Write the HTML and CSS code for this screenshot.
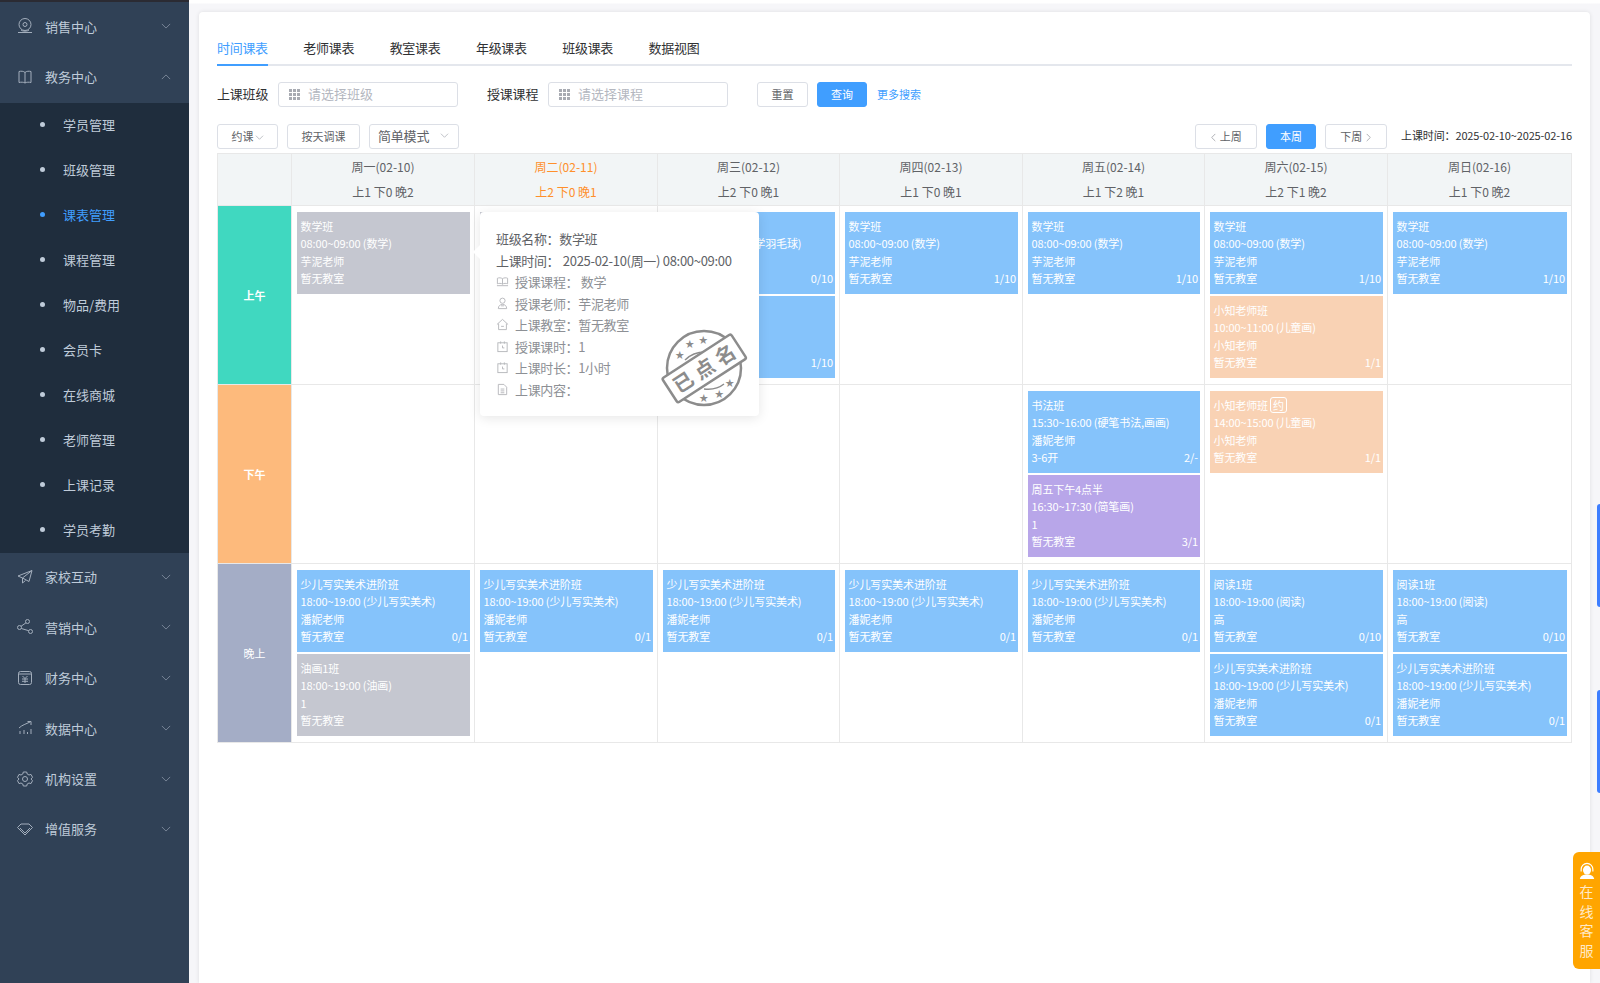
FILE: index.html
```html
<!DOCTYPE html>
<html lang="zh-CN">
<head>
    <meta charset="UTF-8">
    <title>课表管理</title>
    <link rel="stylesheet" href="styles.css">
</head>
<body>
    <aside class="sidebar">
        <div class="menu-title">
            <svg class="menu-icon" viewBox="0 0 18 18"><circle cx="9" cy="7.500" r="6"/><circle cx="9" cy="7.500" r="2"/><path d="M2 15.500h14M5 13c1 1.500 7 1.500 8 0"/></svg>
            <span>销售中心</span>
            <svg class="chevron" viewBox="0 0 12 7"><path d="M1 1l5 5 5-5"/></svg>
        </div>
        <div class="menu-title">
            <svg class="menu-icon" viewBox="0 0 18 18"><path d="M9 4.500C7.500 3 5 3 3 3.500v11c2-.5 4.500-.5 6 .5 1.500-1 4-1 6-.5v-11C13 3 10.500 3 9 4.500zM9 4.500V15"/></svg>
            <span>教务中心</span>
            <svg class="chevron" viewBox="0 0 12 7"><path d="M1 6l5-5 5 5"/></svg>
        </div>
        <ul class="submenu">
            <li>学员管理</li>
            <li>班级管理</li>
            <li class="active">课表管理</li>
            <li>课程管理</li>
            <li>物品/费用</li>
            <li>会员卡</li>
            <li>在线商城</li>
            <li>老师管理</li>
            <li>上课记录</li>
            <li>学员考勤</li>
        </ul>
        <div class="menu-title">
            <svg class="menu-icon" viewBox="0 0 18 18"><path d="M16 2.500L2 8l4.500 2L16 2.500l-3 11-6.500-3.500v5l3-2.500"/></svg>
            <span>家校互动</span>
            <svg class="chevron" viewBox="0 0 12 7"><path d="M1 1l5 5 5-5"/></svg>
        </div>
        <div class="menu-title">
            <svg class="menu-icon" viewBox="0 0 18 18"><circle cx="3.500" cy="9.500" r="2"/><circle cx="11.500" cy="3.500" r="2"/><circle cx="14.500" cy="13.500" r="2"/><path d="M5 8.300l5-3.500M5.300 10.500l7.400 2.200"/></svg>
            <span>营销中心</span>
            <svg class="chevron" viewBox="0 0 12 7"><path d="M1 1l5 5 5-5"/></svg>
        </div>
        <div class="menu-title">
            <svg class="menu-icon" viewBox="0 0 18 18"><rect x="2.500" y="2.500" width="13" height="13" rx="2"/><path d="M2.500 5h13M6.500 7l2.500 2.500L11.500 7M6 10h6M6 12.300h6M9 9.500v4.500"/></svg>
            <span>财务中心</span>
            <svg class="chevron" viewBox="0 0 12 7"><path d="M1 1l5 5 5-5"/></svg>
        </div>
        <div class="menu-title">
            <svg class="menu-icon" viewBox="0 0 18 18"><path d="M3 9c3-3 7-4 11-6M11.500 2.500H15V6M4 15v-3M8 15v-4M11.500 15v-2M15 15V10"/></svg>
            <span>数据中心</span>
            <svg class="chevron" viewBox="0 0 12 7"><path d="M1 1l5 5 5-5"/></svg>
        </div>
        <div class="menu-title">
            <svg class="menu-icon" viewBox="0 0 18 18"><circle cx="9" cy="9" r="2.500"/><path d="M7.300 2h3.400l.5 2 1.800 1 2-.6L16.500 7.300 15 9l1.500 1.700-1.500 2.900-2-.6-1.800 1-.5 2H7.300l-.5-2-1.800-1-2 .6-1.500-2.900L3 9 1.500 7.300 3 4.400l2 .6 1.800-1z"/></svg>
            <span>机构设置</span>
            <svg class="chevron" viewBox="0 0 12 7"><path d="M1 1l5 5 5-5"/></svg>
        </div>
        <div class="menu-title">
            <svg class="menu-icon" viewBox="0 0 18 18"><path d="M5 4h8l3.500 3.500L9 15 1.500 7.500zM4 8l5 5 5-5"/></svg>
            <span>增值服务</span>
            <svg class="chevron" viewBox="0 0 12 7"><path d="M1 1l5 5 5-5"/></svg>
        </div>
    </aside>

    <main class="content">
        <section class="panel">
            <nav class="tabs">
                <a class="tab current">时间课表</a>
                <a class="tab">老师课表</a>
                <a class="tab">教室课表</a>
                <a class="tab">年级课表</a>
                <a class="tab">班级课表</a>
                <a class="tab">数据视图</a>
            </nav>

            <div class="filters">
                <label class="filter-label">上课班级</label>
                <div class="select-box">
                    <span class="grid-icon"><i></i><i></i><i></i><i></i><i></i><i></i><i></i><i></i><i></i></span>
                    请选择班级
                </div>
                <label class="filter-label second">授课课程</label>
                <div class="select-box">
                    <span class="grid-icon"><i></i><i></i><i></i><i></i><i></i><i></i><i></i><i></i><i></i></span>
                    请选择课程
                </div>
                <button class="btn reset-btn">重置</button>
                <button class="btn primary query-btn">查询</button>
                <a class="more-link">更多搜索</a>
            </div>

            <div class="toolbar">
                <button class="btn book-btn">约课<svg class="btn-chevron" viewBox="0 0 12 7"><path d="M1 1l5 5 5-5"/></svg></button>
                <button class="btn day-btn">按天调课</button>
                <button class="btn mode-btn"><span>简单模式</span><svg class="btn-chevron" viewBox="0 0 12 7"><path d="M1 1l5 5 5-5"/></svg></button>
                <div class="week-nav">
                    <button class="btn week-btn"><svg class="side-chevron" viewBox="0 0 7 12"><path d="M6 1L1 6l5 5"/></svg> 上周</button>
                    <button class="btn primary this-week">本周</button>
                    <button class="btn week-btn">下周 <svg class="side-chevron" viewBox="0 0 7 12"><path d="M1 1l5 5-5 5"/></svg></button>
                    <span class="week-range">上课时间：2025-02-10~2025-02-16</span>
                </div>
            </div>

            <div class="timetable">
                <div class="head-cell"></div>
                <div class="head-cell"><p>周一(02-10)</p><p>上1 下0 晚2</p></div>
                <div class="head-cell today"><p>周二(02-11)</p><p>上2 下0 晚1</p></div>
                <div class="head-cell"><p>周三(02-12)</p><p>上2 下0 晚1</p></div>
                <div class="head-cell"><p>周四(02-13)</p><p>上1 下0 晚1</p></div>
                <div class="head-cell"><p>周五(02-14)</p><p>上1 下2 晚1</p></div>
                <div class="head-cell"><p>周六(02-15)</p><p>上2 下1 晚2</p></div>
                <div class="head-cell"><p>周日(02-16)</p><p>上1 下0 晚2</p></div>

                <!-- 上午 -->
                <div class="period morning">上午</div>
                <div class="cell">
                    <div class="event grey"><p>数学班</p><p>08:00~09:00 (数学)</p><p>芋泥老师</p><p class="event-foot"><span>暂无教室</span></p></div>
                </div>
                <div class="cell">
                    <div class="event grey"></div>
                    <div class="event blue"></div>
                </div>
                <div class="cell">
                    <div class="event blue"><p></p><p>08:00~09:00 (少儿学羽毛球)</p><p></p><p class="event-foot"><span></span><span>0/10</span></p></div>
                    <div class="event blue"><p></p><p></p><p></p><p class="event-foot"><span></span><span>1/10</span></p></div>
                </div>
                <div class="cell">
                    <div class="event blue"><p>数学班</p><p>08:00~09:00 (数学)</p><p>芋泥老师</p><p class="event-foot"><span>暂无教室</span><span>1/10</span></p></div>
                </div>
                <div class="cell">
                    <div class="event blue"><p>数学班</p><p>08:00~09:00 (数学)</p><p>芋泥老师</p><p class="event-foot"><span>暂无教室</span><span>1/10</span></p></div>
                </div>
                <div class="cell">
                    <div class="event blue"><p>数学班</p><p>08:00~09:00 (数学)</p><p>芋泥老师</p><p class="event-foot"><span>暂无教室</span><span>1/10</span></p></div>
                    <div class="event peach"><p>小知老师班</p><p>10:00~11:00 (儿童画)</p><p>小知老师</p><p class="event-foot"><span>暂无教室</span><span>1/1</span></p></div>
                </div>
                <div class="cell">
                    <div class="event blue"><p>数学班</p><p>08:00~09:00 (数学)</p><p>芋泥老师</p><p class="event-foot"><span>暂无教室</span><span>1/10</span></p></div>
                </div>

                <!-- 下午 -->
                <div class="period afternoon">下午</div>
                <div class="cell"></div>
                <div class="cell"></div>
                <div class="cell"></div>
                <div class="cell"></div>
                <div class="cell">
                    <div class="event blue"><p>书法班</p><p>15:30~16:00 (硬笔书法,画画)</p><p>潘妮老师</p><p class="event-foot"><span>3-6开</span><span>2/-</span></p></div>
                    <div class="event purple"><p>周五下午4点半</p><p>16:30~17:30 (简笔画)</p><p>1</p><p class="event-foot"><span>暂无教室</span><span>3/1</span></p></div>
                </div>
                <div class="cell">
                    <div class="event peach"><p>小知老师班<span class="book-tag">约</span></p><p>14:00~15:00 (儿童画)</p><p>小知老师</p><p class="event-foot"><span>暂无教室</span><span>1/1</span></p></div>
                </div>
                <div class="cell"></div>

                <!-- 晚上 -->
                <div class="period evening">晚上</div>
                <div class="cell">
                    <div class="event blue"><p>少儿写实美术进阶班</p><p>18:00~19:00 (少儿写实美术)</p><p>潘妮老师</p><p class="event-foot"><span>暂无教室</span><span>0/1</span></p></div>
                    <div class="event grey"><p>油画1班</p><p>18:00~19:00 (油画)</p><p>1</p><p class="event-foot"><span>暂无教室</span></p></div>
                </div>
                <div class="cell">
                    <div class="event blue"><p>少儿写实美术进阶班</p><p>18:00~19:00 (少儿写实美术)</p><p>潘妮老师</p><p class="event-foot"><span>暂无教室</span><span>0/1</span></p></div>
                </div>
                <div class="cell">
                    <div class="event blue"><p>少儿写实美术进阶班</p><p>18:00~19:00 (少儿写实美术)</p><p>潘妮老师</p><p class="event-foot"><span>暂无教室</span><span>0/1</span></p></div>
                </div>
                <div class="cell">
                    <div class="event blue"><p>少儿写实美术进阶班</p><p>18:00~19:00 (少儿写实美术)</p><p>潘妮老师</p><p class="event-foot"><span>暂无教室</span><span>0/1</span></p></div>
                </div>
                <div class="cell">
                    <div class="event blue"><p>少儿写实美术进阶班</p><p>18:00~19:00 (少儿写实美术)</p><p>潘妮老师</p><p class="event-foot"><span>暂无教室</span><span>0/1</span></p></div>
                </div>
                <div class="cell">
                    <div class="event blue"><p>阅读1班</p><p>18:00~19:00 (阅读)</p><p>高</p><p class="event-foot"><span>暂无教室</span><span>0/10</span></p></div>
                    <div class="event blue"><p>少儿写实美术进阶班</p><p>18:00~19:00 (少儿写实美术)</p><p>潘妮老师</p><p class="event-foot"><span>暂无教室</span><span>0/1</span></p></div>
                </div>
                <div class="cell">
                    <div class="event blue"><p>阅读1班</p><p>18:00~19:00 (阅读)</p><p>高</p><p class="event-foot"><span>暂无教室</span><span>0/10</span></p></div>
                    <div class="event blue"><p>少儿写实美术进阶班</p><p>18:00~19:00 (少儿写实美术)</p><p>潘妮老师</p><p class="event-foot"><span>暂无教室</span><span>0/1</span></p></div>
                </div>
            </div>
        </section>
    </main>

    <!-- 课程详情浮层 -->
    <div class="popover">
        <p class="popover-main">班级名称：数学班</p>
        <p class="popover-main">上课时间： <span class="popover-time">2025-02-10(周一) 08:00~09:00</span></p>
        <p><svg class="popover-icon" viewBox="0 0 14 14"><path d="M7 4C5.500 2.800 3 2.800 1.500 3.500v6c1.500-.7 4-.7 5.500.3 1.500-1 4-1 5.500-.3v-6C11 2.800 8.500 2.800 7 4zM7 4v6M1 11.500h12"/></svg>授课课程： 数学</p>
        <p><svg class="popover-icon" viewBox="0 0 14 14"><circle cx="7" cy="4" r="2.800"/><path d="M2.500 12.500c0-3 2-4.500 4.500-4.500s4.500 1.500 4.500 4.500zM5.500 9.500h3"/></svg>授课老师：芋泥老师</p>
        <p><svg class="popover-icon" viewBox="0 0 14 14"><path d="M1 7l6-5.500L13 7M2.800 6v6.500h8.400V6M5.500 9h3"/></svg>上课教室：暂无教室</p>
        <p><svg class="popover-icon" viewBox="0 0 14 14"><rect x="2" y="3" width="10" height="9.500"/><path d="M5 1.500V4M9 1.500V4M7 6v2.500h2"/></svg>授课课时：1</p>
        <p><svg class="popover-icon" viewBox="0 0 14 14"><rect x="2" y="3" width="10" height="9.500"/><path d="M5 1.500V4M9 1.500V4M7 6v2.500h2"/></svg>上课时长：1小时</p>
        <p><svg class="popover-icon" viewBox="0 0 14 14"><path d="M2.500 1.500h6l3 3v8h-9zM5 6.500h4M5 8.500h4M5 10.500h4"/></svg>上课内容：</p>

        <svg class="stamp" viewBox="0 0 100 100">
            <circle class="stamp-ring" cx="50" cy="50" r="37"/>
            <path class="stamp-ring thin" d="M31 42c5-5 12-8 20-8M50 71c8 1 15-1 20-5"/>
            <text class="stamp-star" x="25.500" y="39.500">★</text>
            <text class="stamp-star" x="35.500" y="29">★</text>
            <text class="stamp-star" x="49" y="25">★</text>
            <text class="stamp-star" x="49.500" y="83">★</text>
            <text class="stamp-star" x="65" y="78.500">★</text>
            <text class="stamp-star" x="75.500" y="67.500">★</text>
            <g transform="rotate(-33 50 50)">
                <rect class="stamp-band" x="9" y="36" width="82" height="29" rx="2"/>
                <text class="stamp-text" x="52.500" y="58">已点名</text>
            </g>
        </svg>
    </div>

    <div class="edge-tab first"></div>
    <div class="edge-tab second"></div>

    <div class="service">
        <svg class="service-icon" viewBox="0 0 20 20"><path class="headset" d="M3.500 10.500V8a6.500 6.500 0 0 1 13 0v2.500"/><ellipse class="face" cx="10" cy="9" rx="4.500" ry="5"/><path class="face" d="M2 19c1-4 4-5 8-5s7 1 8 5z"/></svg>
        <span>在</span><span>线</span><span>客</span><span>服</span>
    </div>
</body>
</html>
```

FILE: styles.css
```css
:root {
    --primary: #409eff;
    --border: #dcdfe6;
    --line: #e8e8e8;
    --menu-bg: #304156;
    --submenu-bg: #1f2d3d;
}

* {
    margin: 0;
    padding: 0;
    box-sizing: border-box;
}

body {
    font-family: "Noto Sans CJK SC", "Noto Sans", sans-serif;
    font-size: 13px;
    color: #303133;
    display: flex;
    height: 983px;
    overflow: hidden;
    background-color: #f6f6f9;
}

/* sidebar */
.sidebar {
    width: 189px;
    flex-shrink: 0;
    padding-top: 2px;
    background-color: var(--menu-bg);
    box-shadow: inset 0 2px 0 #2b2b33;
}

.menu-title {
    height: 50.400px;
    display: flex;
    align-items: center;
    padding: 0 0 2px 16px;
    color: #bfcbd9;
}

.menu-icon {
    width: 18px;
    height: 18px;
    margin-right: 11px;
    fill: none;
    stroke: #a3aebc;
    stroke-width: 1;
}

.chevron {
    width: 10px;
    height: 6px;
    margin-left: auto;
    margin-right: 18px;
    fill: none;
    stroke: #8592a3;
    stroke-width: 1;
}

.submenu {
    list-style: none;
    background-color: var(--submenu-bg);
}

.submenu li {
    height: 45px;
    display: flex;
    align-items: center;
    padding: 0 0 2px 40px;
    color: #bfcbd9;
}

.submenu li::before {
    content: "";
    width: 5px;
    height: 5px;
    border-radius: 50%;
    background-color: #bfcbd9;
    margin-right: 18px;
}

.submenu li.active {
    color: var(--primary);
}

.submenu li.active::before {
    background-color: var(--primary);
}

/* main panel */
.content {
    flex: 1;
    padding: 12px 10px 0;
    background: linear-gradient(#fff 3px, #f6f6f9 4px);
    min-width: 0;
}

.panel {
    height: 100%;
    padding: 0 18px;
    background-color: white;
    border-radius: 4px 4px 0 0;
    box-shadow: 0 0 4px rgba(0, 0, 0, .1);
}

.tabs {
    display: flex;
    gap: 35.500px;
    height: 54px;
    padding-top: 25px;
    border-bottom: 2px solid #e4e7ed;
}

.tab {
    height: 29px;
    line-height: 22px;
    color: #303133;
    letter-spacing: -.3px;
}

.tab.current {
    color: var(--primary);
    border-bottom: 2px solid var(--primary);
}

.filters {
    display: flex;
    align-items: center;
    height: 25px;
    margin-top: 16px;
}

.filter-label {
    width: 61px;
    padding-bottom: 3px;
    letter-spacing: -.2px;
}

.filter-label.second {
    margin-left: 29px;
}

.select-box {
    width: 180px;
    height: 25px;
    display: flex;
    align-items: center;
    padding: 0 0 2px 10px;
    border: 1px solid var(--border);
    border-radius: 3px;
    color: #b4b7bf;
}

.grid-icon {
    display: grid;
    grid-template-columns: repeat(3, 3px);
    gap: 1px;
    margin: 2px 8px 0 0;
}

.grid-icon i {
    height: 3px;
    background-color: #a8abb2;
}

.btn {
    height: 25px;
    padding-bottom: 2px;
    border: 1px solid var(--border);
    border-radius: 3px;
    background-color: white;
    color: #606266;
    font-family: inherit;
    font-size: 11px;
}

.btn.primary {
    background-color: var(--primary);
    border-color: var(--primary);
    color: white;
}

.reset-btn {
    width: 51px;
    margin-left: 29px;
}

.query-btn {
    width: 50px;
    margin-left: 9px;
}

.more-link {
    margin-left: 10px;
    padding-bottom: 2px;
    font-size: 11px;
    color: var(--primary);
}

.toolbar {
    display: flex;
    align-items: center;
    height: 25px;
    margin-top: 17px;
}

.btn-chevron {
    width: 9px;
    height: 5px;
    fill: none;
    stroke: #a8abb2;
    vertical-align: middle;
    margin-left: 1px;
}

.side-chevron {
    width: 5px;
    height: 9px;
    margin: 0 1px;
    fill: none;
    stroke: #909399;
    vertical-align: -1px;
}

.book-btn {
    width: 61px;
}

.day-btn {
    width: 73px;
    margin-left: 9px;
}

.mode-btn {
    width: 90px;
    margin-left: 9px;
    display: flex;
    align-items: center;
    padding-left: 8px;
    font-size: 13px;
    letter-spacing: -.2px;
}

.mode-btn .btn-chevron {
    margin-left: 11px;
}

.week-nav {
    margin-left: auto;
    display: flex;
    align-items: center;
}

.week-btn {
    width: 62px;
}

.this-week {
    width: 50px;
    margin: 0 9px;
}

.week-range {
    width: 171px;
    margin-left: 14px;
    padding-bottom: 4px;
    font-size: 11px;
    letter-spacing: -.12px;
    white-space: nowrap;
}

/* timetable */
.timetable {
    display: grid;
    grid-template-columns: 74px 183px 183px 182px 183px 182px 183px 1fr;
    grid-template-rows: 52px repeat(3, 179px);
    margin-top: 4px;
    border-top: 1px solid var(--line);
    border-right: 1px solid var(--line);
}

.head-cell {
    background-color: #f2f5f6;
    border-left: 1px solid var(--line);
    border-bottom: 1px solid var(--line);
    text-align: center;
    font-size: 12px;
    color: #606266;
    padding-top: 1px;
}

.head-cell p {
    height: 24.500px;
    line-height: 24px;
}

.head-cell.today {
    color: #ff8f2b;
}

.period {
    display: flex;
    align-items: center;
    justify-content: center;
    border-left: 1px solid var(--line);
    border-bottom: 1px solid var(--line);
    color: white;
    font-size: 11px;
}

.morning {
    background-color: #40d8c0;
    font-weight: 700;
}

.afternoon {
    background-color: #fdba7c;
    font-weight: 700;
}

.evening {
    background-color: #a4adc6;
}

.cell {
    display: flex;
    flex-direction: column;
    gap: 2px;
    padding: 6px 4px 0 5px;
    border-left: 1px solid var(--line);
    border-bottom: 1px solid var(--line);
    min-width: 0;
}

.event {
    height: 82px;
    flex-shrink: 0;
    padding: 6px 2px 0 3.500px;
    color: white;
    font-size: 11px;
    line-height: 17.300px;
    letter-spacing: -.1px;
    white-space: nowrap;
    overflow: hidden;
}

.event p {
    height: 17.300px;
}

.event-foot {
    display: flex;
    justify-content: space-between;
}

.blue {
    background-color: #85c3fb;
}

.grey {
    background-color: #c5c7d0;
}

.peach {
    background-color: #f9d2b4;
}

.purple {
    background-color: #b8a6e9;
}

.book-tag {
    display: inline-block;
    height: 16px;
    line-height: 14px;
    margin-left: 2px;
    padding: 0 2px;
    border: 1px solid white;
    border-radius: 3px;
    vertical-align: top;
}

/* popover */
.popover {
    position: absolute;
    left: 480px;
    top: 212px;
    width: 279px;
    height: 204px;
    padding: 16px 0 0 16px;
    background-color: white;
    border-radius: 4px;
    box-shadow: 0 2px 12px rgba(0, 0, 0, .1);
    font-size: 13px;
    line-height: 21.500px;
    letter-spacing: -.35px;
    color: #8d9095;
    white-space: nowrap;
}

.popover::before {
    content: "";
    position: absolute;
    left: -5px;
    top: 35px;
    width: 10px;
    height: 10px;
    background-color: white;
    transform: rotate(45deg);
}

.popover p {
    position: relative;
    display: flex;
    align-items: center;
    white-space: pre;
}

.popover-main {
    color: #606266;
}

.popover-time {
    margin-left: 1px;
    letter-spacing: -.3px;
}

.popover-icon {
    width: 13px;
    height: 13px;
    margin-right: 6px;
    fill: none;
    stroke: #b5b7bb;
    stroke-width: 1;
}

.stamp {
    position: absolute;
    left: 174px;
    top: 106px;
    width: 100px;
    height: 100px;
    overflow: visible;
}

.stamp-ring {
    fill: none;
    stroke: #8c8c8c;
    stroke-width: 2.500;
}

.stamp-ring.thin {
    stroke-width: 1.500;
}

.stamp-star {
    font-size: 9px;
    fill: #8c8c8c;
    text-anchor: middle;
}

.stamp-band {
    fill: white;
    stroke: #8c8c8c;
    stroke-width: 2.500;
}

.stamp-text {
    font-size: 20px;
    font-weight: 700;
    fill: #8c8c8c;
    text-anchor: middle;
    letter-spacing: 5px;
}

/* page edge widgets */
.edge-tab {
    position: absolute;
    right: 0;
    width: 3px;
    height: 103px;
    background-color: #3d7eff;
    border-radius: 4px 0 0 4px;
}

.edge-tab.first {
    top: 504px;
}

.edge-tab.second {
    top: 690px;
}

.service {
    position: absolute;
    right: 0;
    top: 852px;
    width: 27px;
    height: 117px;
    display: flex;
    flex-direction: column;
    align-items: center;
    padding-top: 10px;
    background-color: #ffa500;
    border-radius: 6px 0 0 6px;
    color: #ffe9c7;
    font-size: 14px;
    line-height: 19.500px;
}

.service-icon {
    width: 18px;
    height: 18px;
    margin-bottom: 2px;
}

.headset {
    fill: none;
    stroke: white;
    stroke-width: 1.300;
}

.face {
    fill: white;
}
```
